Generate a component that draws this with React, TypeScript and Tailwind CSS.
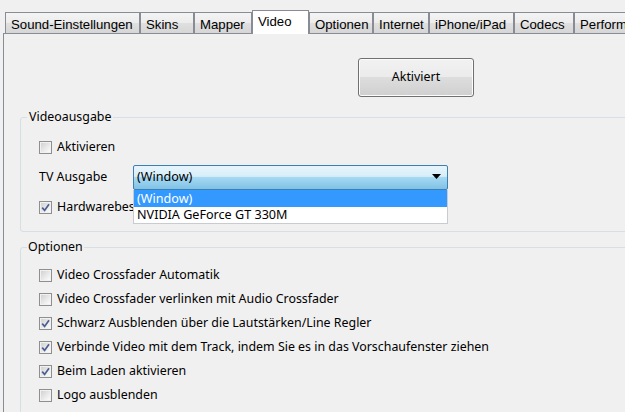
import React from "react";

const tabs = [
  { label: "Sound-Einstellungen", w: "w-[135px]" },
  { label: "Skins", w: "w-[54px]" },
  { label: "Mapper", w: "w-[58px]" },
  { label: "Video", w: "w-[57px]", active: true },
  { label: "Optionen", w: "w-[64px]" },
  { label: "Internet", w: "w-[56px]" },
  { label: "iPhone/iPad", w: "w-[85px]" },
  { label: "Codecs", w: "w-[60px]" },
  { label: "Performance", w: "w-[90px]" },
];

function Check({ checked }: { checked?: boolean }) {
  return (
    <span className="flex-none w-[13px] h-[13px] border border-[#8e8f8f] bg-[#f4f4f4] flex">
      <span className="relative flex-1 border border-[#f1f1f1] bg-[linear-gradient(135deg,#d2d2d2,#e9e9e9_55%,#fbfbfb)]">
        {checked && (
          <svg viewBox="0 0 9 9" className="absolute inset-0 w-[9px] h-[9px]">
            <path d="M1.2 4.6 L3.6 7.4 L8 1.2" fill="none" stroke="#4b5f92" strokeWidth="1.7" />
          </svg>
        )}
      </span>
    </span>
  );
}

function Row({ label, checked, h = "h-[24px]" }: { label: string; checked?: boolean; h?: string }) {
  return (
    <div className={`${h} flex-none flex items-center pl-[18px] gap-[5px]`}>
      <Check checked={checked} />
      <span className="whitespace-nowrap">{label}</span>
    </div>
  );
}

export default function App() {
  return (
    <div className="w-[625px] h-[412px] overflow-hidden bg-[#f0f0f0] text-black font-['Noto_Sans',sans-serif] text-[12.4px]">
      {/* tab strip */}
      <div className="h-[33px] flex items-end pl-[5px] font-['Liberation_Sans',Arial,sans-serif] text-[13.2px]">
        {tabs.map((t) =>
          t.active ? (
            <div
              key={t.label}
              className={`${t.w} flex-none h-[24px] -mb-px relative z-10 bg-white border border-b-0 border-[#898c95] pl-[5px] pt-[3px] leading-[15px] whitespace-nowrap`}
            >
              {t.label}
            </div>
          ) : (
            <div
              key={t.label}
              className={`${t.w} flex-none h-[21px] border border-b-0 border-[#898c95] bg-[linear-gradient(to_bottom,#f4f4f4,#ececec_50%,#e0e0e0_50%,#d6d6d6)] pl-[5px] pt-[4px] leading-[15px] whitespace-nowrap overflow-hidden`}
            >
              {t.label}
            </div>
          )
        )}
      </div>

      {/* panel */}
      <div className="ml-[3px] w-[720px] border-t border-l border-[#898c95] flex flex-col items-start pb-[40px]">
        <button className="flex-none mt-[24px] ml-[354px] w-[116px] h-[39px] rounded-[3px] border border-[#707070] bg-[linear-gradient(to_bottom,#f2f2f2,#ebebeb_50%,#dddddd_50%,#cfcfcf)] shadow-[inset_0_0_0_1px_#fcfcfc] text-[12.4px] text-black">
          Aktiviert
        </button>

        <fieldset className="flex-none mt-[12px] ml-[16px] w-[690px] border border-[#d5dfe5] rounded-[3px] pb-[9px]">
          <legend className="ml-[6px] px-[2px] leading-[16px]">Videoausgabe</legend>
          <div className="pt-[7px] flex flex-col">
            <Row label="Aktivieren" h="h-[30px]" />
            <div className="h-[30px] flex-none flex items-center pl-[18px]">
              <span className="w-[94px] flex-none whitespace-nowrap">TV Ausgabe</span>
              <div className="relative w-[315px] h-[25px] flex-none text-[12.6px]">
                <div className="h-full border border-[#3c7fb1] rounded-[2px] bg-[linear-gradient(to_bottom,#e8f5fc,#d6eefa_45%,#a6d8f2_50%,#7fc2e6)] flex items-center pl-[3px] pr-[6px]">
                  <span className="flex-1">(Window)</span>
                  <svg viewBox="0 0 9 6" className="w-[9px] h-[6px]">
                    <polygon points="0,0 9,0 4.5,5" fill="#000" />
                  </svg>
                </div>
                <div className="absolute top-full left-0 w-full z-20 border border-t-0 border-[#c8cbd0] bg-white">
                  <div className="h-[17px] bg-[#3399ff] text-white pl-[3px] leading-[17px]">(Window)</div>
                  <div className="h-[16px] pl-[3px] leading-[16px]">NVIDIA GeForce GT 330M</div>
                </div>
              </div>
            </div>
            <Row label="Hardwarebeschleunigung" checked h="h-[30px]" />
          </div>
        </fieldset>

        <fieldset className="flex-none mt-[7px] ml-[16px] w-[690px] border border-[#d5dfe5] rounded-[3px] pb-[9px]">
          <legend className="ml-[6px] px-[1px] leading-[16px]">Optionen</legend>
          <div className="pt-[8px] flex flex-col">
            <Row label="Video Crossfader Automatik" />
            <Row label="Video Crossfader verlinken mit Audio Crossfader" />
            <Row label="Schwarz Ausblenden über die Lautstärken/Line Regler" checked />
            <Row label="Verbinde Video mit dem Track, indem Sie es in das Vorschaufenster ziehen" checked />
            <Row label="Beim Laden aktivieren" checked />
            <Row label="Logo ausblenden" />
            <Row label="Video-Auflösung automatisch anpassen" />
          </div>
        </fieldset>
      </div>
    </div>
  );
}
